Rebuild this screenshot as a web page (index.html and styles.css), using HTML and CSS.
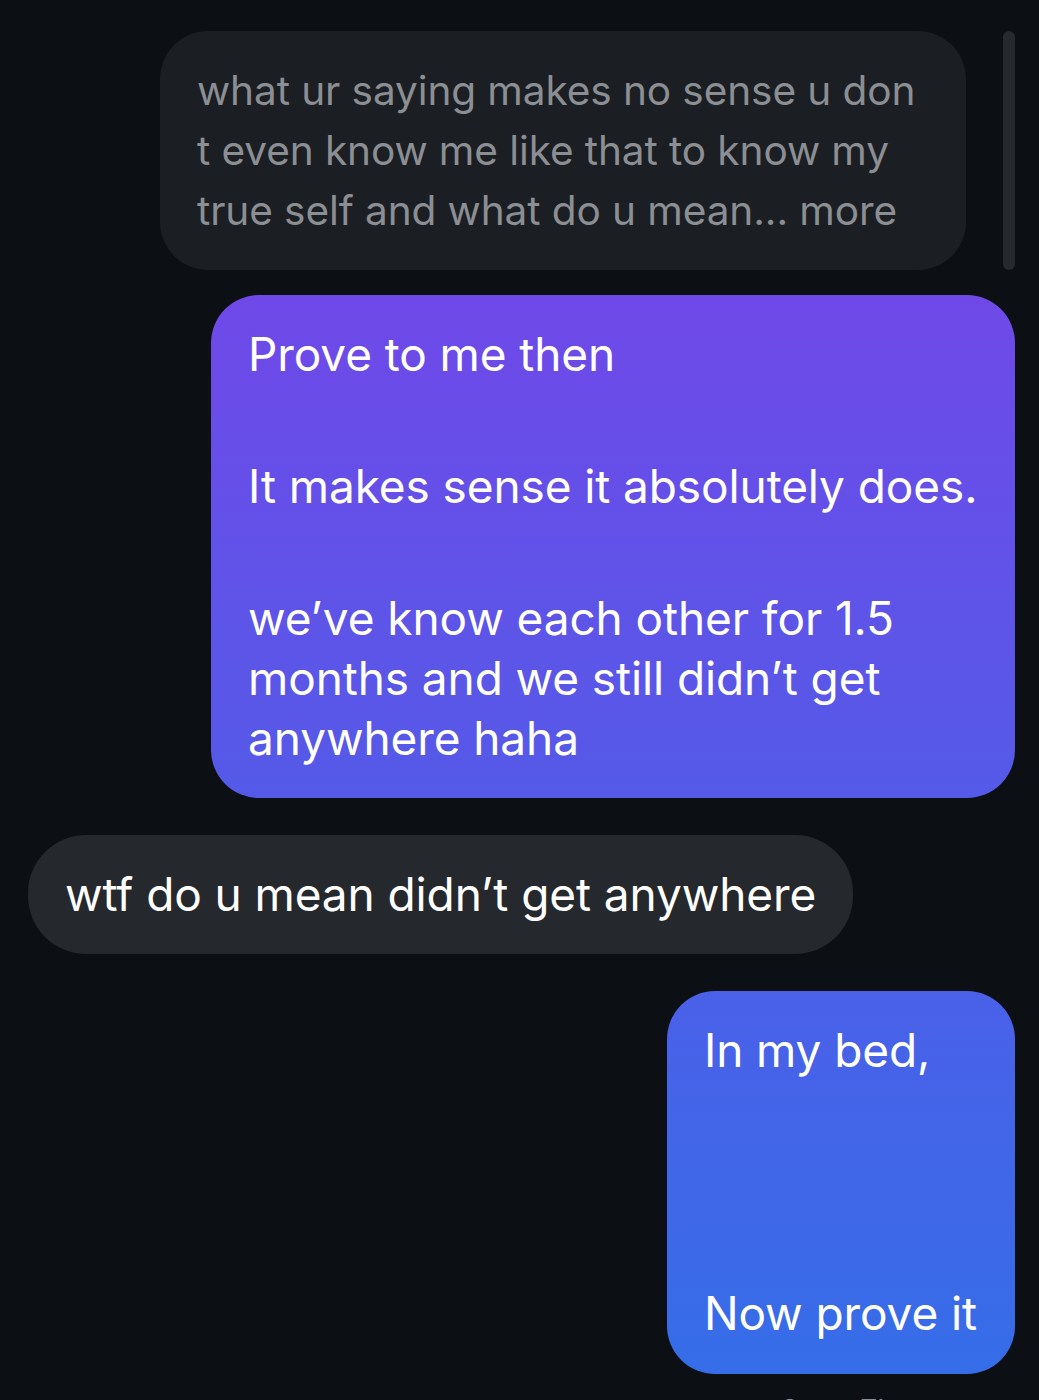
FILE: index.html
```html
<!DOCTYPE html>
<html lang="en">
<head>
    <meta charset="UTF-8">
    <meta name="viewport" content="width=device-width, initial-scale=1.0">
    <title>Chat</title>
    <link rel="stylesheet" href="styles.css">
</head>
<body>
    <div class="thread">
        <div class="row row-reply">
            <div class="bubble quoted">
                what ur saying makes no sense u don<br>
                t even know me like that to know my<br>
                true self and what do u mean... more
            </div>
            <div class="reply-bar"></div>
        </div>

        <div class="row row-out">
            <div class="bubble sent sent-wide">
                <p>Prove to me then</p>
                <p>It makes sense it absolutely does.</p>
                <p>we’ve know each other for 1.5<br>months and we still didn’t get<br>anywhere haha</p>
            </div>
        </div>

        <div class="row row-in">
            <div class="bubble received">wtf do u mean didn’t get anywhere</div>
        </div>

        <div class="row row-out">
            <div class="bubble sent sent-tall">
                <p>In my bed,</p>
                <p>Now prove it</p>
            </div>
        </div>

        <div class="seen">Seen 7h</div>
    </div>
</body>
</html>
```

FILE: styles.css
```css
body {
    margin: 0;
    background: #0c0f14;
    font-family: Inter, "Noto Sans", sans-serif;
    color: white;
    height: 1400px;
    overflow: hidden;
}
.thread {
    display: flex;
    flex-direction: column;
    padding: 31px 24px 0 28px;
}
.row {
    display: flex;
}
.row-out {
    justify-content: flex-end;
}
.row-in {
    justify-content: flex-start;
}
.row-reply {
    justify-content: flex-end;
    gap: 37px;
}
.bubble {
    font-size: 46px;
    letter-spacing: -0.1px;
    line-height: 60px;
    border-radius: 48px;
    padding: 30px 37px 29px;
    white-space: nowrap;
}
.bubble p {
    margin: 0;
}
.quoted {
    background: #1b1e22;
    color: #8b8e93;
    width: 732px;
    font-size: 40.6px;
}
.reply-bar {
    width: 12px;
    height: 239px;
    border-radius: 6px;
    background: #26292e;
}
.sent {
    background: linear-gradient(180deg, #7f3fe8 0px, #346ee8 1400px);
    background-attachment: fixed;
}
.sent-wide {
    margin-top: 25px;
    width: 730px;
    padding: 29px 37px 30px;
}
.sent-wide p + p {
    margin-top: 72px;
}
.received {
    background: #25282d;
    margin-top: 37px;
    border-radius: 58px;
    padding: 29px 37px 30px;
}
.sent-tall {
    margin-top: 37px;
    padding: 29px 38px 31px 37px;
}
.sent-tall p + p {
    margin-top: 203px;
}
.seen {
    align-self: flex-end;
    margin: 18px 120px 0 0;
    font-size: 30px;
    color: #8b8e93;
}
```
